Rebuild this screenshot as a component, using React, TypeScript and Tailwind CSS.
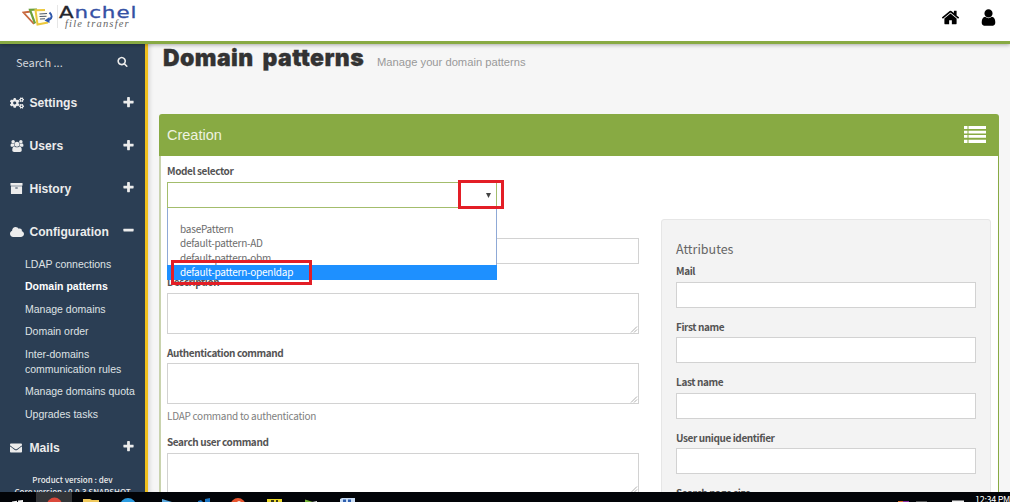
import React from "react";
import { FaCogs, FaCloud, FaEnvelope } from "react-icons/fa";

const SANS = "font-['Noto_Sans_CJK_SC',sans-serif]";
const ARIAL = "font-['Liberation_Sans',sans-serif]";

const PATHS = {
  home: "M1472 992v480q0 26-19 45t-45 19h-384v-384h-256v384h-384q-26 0-45-19t-19-45v-480q0-1 .5-3t.5-3l575-474 575 474q1 2 1 6zm223-69l-62 74q-8 9-21 11h-3q-13 0-21-7l-692-577-692 577q-12 8-24 7-13-2-21-11l-62-74q-8-10-7-23.5t11-21.5l719-599q32-26 76-26t76 26l244 204v-195q0-14 9-23t23-9h192q14 0 23 9t9 23v408l219 182q10 8 11 21.5t-7 23.5z",
  user: "M1536 1399q0 109-62.5 187t-150.5 78h-854q-88 0-150.5-78t-62.5-187q0-85 8.5-160.5t31.5-152 58.5-131 94-89 134.5-34.5q131 128 313 128t313-128q76 0 134.5 34.5t94 89 58.5 131 31.5 152 8.5 160.5zm-256-887q0 159-112.5 271.5t-271.5 112.5-271.5-112.5-112.5-271.5 112.5-271.5 271.5-112.5 271.5 112.5 112.5 271.5z",
  plus: "M1600 736v192q0 40-28 68t-68 28h-416v416q0 40-28 68t-68 28h-192q-40 0-68-28t-28-68v-416h-416q-40 0-68-28t-28-68v-192q0-40 28-68t68-28h416v-416q0-40 28-68t68-28h192q40 0 68 28t28 68v416h416q40 0 68 28t28 68z",
  minus: "M1600 736v192q0 40-28 68t-68 28h-1216q-40 0-68-28t-28-68v-192q0-40 28-68t68-28h1216q40 0 68 28t28 68z",
  search: "M1216 832q0-185-131.5-316.5t-316.5-131.5-316.5 131.5-131.5 316.5 131.5 316.5 316.5 131.5 316.5-131.5 131.5-316.5zm512 832q0 52-38 90t-90 38q-54 0-90-38l-343-342q-179 124-399 124-143 0-273.5-55.5t-225-150-150-225-55.5-273.5 55.5-273.5 150-225 225-150 273.5-55.5 273.5 55.5 225 150 150 225 55.5 273.5q0 220-124 399l343 343q37 37 37 90z",
  users: "M657 896q-162 5-265 128h-134q-82 0-138-40.5t-56-118.5q0-353 124-353 6 0 43.5 21t97.5 42.5 119.5 21.5q67 0 133-23-5 37-5 66 0 139 81 256zm1071 637q0 120-73 189.5t-194 69.5h-874q-121 0-194-69.5t-73-189.5q0-53 3.5-103.5t14-109 26.5-108.5 43-97.5 62-81 85.5-53.5 111.5-20q10 0 43 21.5t73 48 107 48 135 21.5 135-21.5 107-48 73-48 43-21.5q61 0 111.5 20t85.5 53.5 62 81 43 97.5 26.5 108.5 14 109 3.5 103.5zm-1024-1277q0 106-75 181t-181 75-181-75-75-181 75-181 181-75 181 75 75 181zm704 384q0 159-112.5 271.5t-271.5 112.5-271.5-112.5-112.5-271.5 112.5-271.5 271.5-112.5 271.5 112.5 112.5 271.5zm576 225q0 78-56 118.5t-138 40.5h-134q-103-123-265-128 81-117 81-256 0-29-5-66 66 23 133 23 59 0 119.5-21.5t97.5-42.5 43.5-21q124 0 124 353zm-128-609q0 106-75 181t-181 75-181-75-75-181 75-181 181-75 181 75 75 181z",
  archive: "M1088 832q0-26-19-45t-45-19h-256q-26 0-45 19t-19 45 19 45 45 19h256q26 0 45-19t19-45zm576-192v960q0 26-19 45t-45 19h-1408q-26 0-45-19t-19-45v-960q0-26 19-45t45-19h1408q26 0 45 19t19 45zm64-448v256q0 26-19 45t-45 19h-1536q-26 0-45-19t-19-45v-256q0-26 19-45t45-19h1536q26 0 45 19t19 45z",
};

function Icon({ name, className }: { name: keyof typeof PATHS; className: string }) {
  return (
    <svg viewBox={name === "users" ? "0 0 2048 1792" : "0 0 1792 1792"} className={className} fill="currentColor">
      <path d={PATHS[name]} />
    </svg>
  );
}

function Logo() {
  return (
    <div className="flex items-start pl-[22px] pt-[5px]">
      <svg width="32" height="22" viewBox="0 0 32 22" className="mt-[2px] shrink-0" fill="none">
        <path d="M9 4.500 L1.500 5.500 L12 17" stroke="#c8693f" strokeWidth="1.8" />
        <path d="M15 2.500 L8 2.800 L13 16.500" stroke="#6da03c" strokeWidth="2.2" />
        <path d="M13.500 3 L22 2.500 L26 5 L26 15 L15.500 18 Z" fill="#fffdf2" />
        <path d="M23 3 L13.500 3.200 L15.500 17.500 L26 15.500" stroke="#ecc83c" strokeWidth="2" />
        <path d="M17.500 7 L25 6.500 M17.500 9.500 L24.500 9.200 M18 12 L23 11.700" stroke="#4c5868" strokeWidth="1.1" />
        <path d="M27.500 5.500 Q32 10 27 13" stroke="#2f58ac" strokeWidth="2" />
        <path d="M27.500 10 L22.500 13.500 L27.500 16 Z" fill="#2f58ac" />
      </svg>
      <div className="ml-[3px] h-[23px] w-px bg-[#e6e6e6]" />
      <div className="pl-px">
        <div className="h-[14px] w-[60px] origin-left scale-x-[1.340] font-['DejaVu_Sans',sans-serif] text-[16px] leading-[16px] tracking-[0.7px] text-[#3450a4] [-webkit-text-stroke:0.3px]">
          <span className="text-[#26262c]">A</span>nchel
        </div>
        <div className="whitespace-nowrap pl-[6px] font-['Liberation_Serif',serif] text-[10.5px] italic leading-[10px] tracking-[1.2px] text-[#666]">
          file transfer
        </div>
      </div>
    </div>
  );
}

function MenuRow({ icon, label, open }: { icon: React.ReactNode; label: string; open?: boolean }) {
  return (
    <div className="flex h-[42.75px] shrink-0 items-center pl-[10px] pr-[10px] pt-[2px]">
      <span className="flex w-[19.5px] shrink-0 items-center">{icon}</span>
      <span className="flex-1 whitespace-nowrap text-[12.1px] font-bold leading-[16px]">{label}</span>
      <Icon name={open ? "minus" : "plus"} className="mt-[-2px] h-[13px] w-[13px] shrink-0" />
    </div>
  );
}

const SUB = ["LDAP connections", "Domain patterns", "Manage domains", "Domain order", "Inter-domains communication rules", "Manage domains quota", "Upgrades tasks"];

function Sidebar() {
  return (
    <aside className={`flex w-[148px] shrink-0 flex-col border-r-3 border-[#f0bf1c] bg-[#2b3e54] text-[#ececec] ${ARIAL}`}>
      <div className="flex h-[37px] shrink-0 items-center justify-between pb-[2px] pl-[16px] pr-[17px]">
        <span className={`text-[11px] leading-[16px] text-[#d5d9dd] ${SANS}`}>Search ...</span>
        <Icon name="search" className="h-[11px] w-[11px]" />
      </div>
      <MenuRow icon={<FaCogs className="h-[14px] w-[14px]" />} label="Settings" />
      <MenuRow icon={<Icon name="users" className="h-[12px] w-[14px]" />} label="Users" />
      <MenuRow icon={<Icon name="archive" className="h-[13px] w-[13px]" />} label="History" />
      <MenuRow icon={<FaCloud className="h-[14px] w-[14px]" />} label="Configuration" open />
      <ul className="mt-[0.75px] shrink-0 text-[10.5px] leading-[15px] text-[#dfe2e5]">
        {SUB.map((s, i) => (
          <li key={s} className={`py-[3.75px] pl-[25px] ${i === 1 ? "font-bold text-white" : ""}`}>
            {s}
          </li>
        ))}
      </ul>
      <MenuRow icon={<FaEnvelope className="h-[12px] w-[12px]" />} label="Mails" />
      <div className={`shrink-0 whitespace-nowrap pt-[6px] text-center text-[8px] font-medium leading-[12px] ${SANS}`}>
        Product version : dev
        <br />
        Core version : 0.0.3 SNAPSHOT
      </div>
    </aside>
  );
}

function Label({ children, className = "" }: { children: React.ReactNode; className?: string }) {
  return <div className={`text-[10px] font-bold leading-[16px] tracking-[-0.4px] text-[#545454] ${className}`}>{children}</div>;
}

function Area({ className }: { className: string }) {
  return (
    <div className={`flex items-end justify-end border border-[#d2d2d2] bg-white ${className}`}>
      <svg width="8" height="8" viewBox="0 0 8 8" stroke="#999" strokeWidth="0.8">
        <path d="M1 7.5 L7 1.5 M4 7.5 L7 4.5" />
      </svg>
    </div>
  );
}

function Selector() {
  return (
    <div className="relative">
      <div className="flex h-[26px] w-[330px] items-center justify-end border border-[#a3bd6c] bg-white pr-[5px]">
        <svg width="5" height="5" viewBox="0 0 5 5" fill="#444">
          <path d="M0 0 H5 L2.5 5 Z" />
        </svg>
      </div>
      <div className="absolute left-0 top-[26px] z-10 w-[330px] border-x border-[#8fa9d6] bg-white pt-[14px] text-[10px] leading-[14.25px] tracking-[-0.23px] text-[#6c6c6c]">
        <div className="pl-[12px]">basePattern</div>
        <div className="pl-[12px]">default-pattern-AD</div>
        <div className="pl-[12px]">default-pattern-obm</div>
        <div className="-mx-px h-[15px] bg-[#1e90ff] pl-[13px] text-white">default-pattern-openldap</div>
      </div>
      <div className="absolute left-[291px] top-[-2px] z-20 h-[29px] w-[46px] border-[3px] border-[#e31e26]" />
      <div className="absolute left-[4px] top-[77.5px] z-20 h-[25px] w-[141px] border-[3px] border-[#e31e26]" />
    </div>
  );
}

function Taskbar() {
  return (
    <footer className="flex h-[10px] shrink-0 items-start justify-between overflow-hidden bg-[#020408]">
      <svg width="370" height="10" viewBox="0 0 370 10">
        <path d="M12 9.5 L17 8.8 V10 H12 Z M18 8.6 L23 8 V10 H18 Z" fill="#eee" />
        <rect x="36" width="36" height="10" fill="#333538" />
        <circle cx="54.5" cy="13" r="7.5" fill="#d9483b" />
        <path d="M83 7 H90 L92 8 H99 V10 H83 Z" fill="#f0c95c" />
        <circle cx="128" cy="14" r="8" fill="#2b9be0" />
        <path d="M162 7 L172 10 H162 Z" fill="#5aa7dc" />
        <path d="M205 7 L210 6 V10 H205 Z M198 9 L201 8 L203 10 H198 Z" fill="#1c76c4" />
        <circle cx="238" cy="13.5" r="7.5" fill="#e8552f" />
        <circle cx="239" cy="11" r="2" fill="#f4e4da" />
        <path d="M267 7 H282 V10 H267 Z" fill="#ecd92a" />
        <path d="M271 8 H274 V10 H271 Z M276 8 H278 V10 H276 Z" fill="#3a3a18" />
        <path d="M305 7.5 L313 10 H305 Z" fill="#78b83c" />
        <path d="M312 10 L317 9 V10 Z" fill="#ddd" />
        <path d="M342 6 H355 V10 H340 V7 Z" fill="#c8dcf4" />
        <path d="M343 7.5 H346 V10 H343 Z M348 7.5 H351 V10 H348 Z" fill="#2f5fae" />
      </svg>
      <div className="flex">
        <svg width="78" height="10" viewBox="0 0 78 10">
          <path d="M1 9 H6 V10 H1 Z" fill="#e0742c" />
          <path d="M6 9 H12 V10 H6 Z" fill="#8b2ba0" />
          <path d="M19 9.3 H30 V10 H19 Z" fill="#777" />
          <path d="M55 8.5 H67 V10 H55 Z" fill="#eee" />
        </svg>
        <div className={`w-[35px] whitespace-nowrap text-[9px] leading-[15px] tracking-[-0.3px] text-white ${SANS}`}>12:34 PM</div>
      </div>
    </footer>
  );
}

export default function App() {
  return (
    <div className={`flex h-[502px] w-[1010px] flex-col overflow-hidden bg-[#f6f6f6] ${SANS}`}>
      <header className="relative z-30 flex h-[44px] shrink-0 items-start justify-between border-b-3 border-[#88aa43] bg-white shadow-[0_1px_4px_rgba(0,0,0,0.3)]">
        <Logo />
        <div className="flex gap-[19px] pr-[12px] pt-[8px] text-black">
          <Icon name="home" className="h-[19px] w-[19px]" />
          <Icon name="user" className="h-[19px] w-[19px]" />
        </div>
      </header>

      <div className="flex min-h-0 flex-1 overflow-hidden">
        <Sidebar />
        <main className="flex flex-1 flex-col pl-[11px] pr-[11px] shadow-[inset_4px_0_4px_-2px_rgba(0,0,0,0.12)]">
          <div className="flex h-[70px] shrink-0 items-start pl-[4px]">
            <h1 className="w-[204px] whitespace-nowrap font-['Inter',sans-serif] text-[23px] font-black leading-[28px] tracking-[0.4px] [word-spacing:4px] [-webkit-text-stroke:0.3px] text-[#333]">
              Domain patterns
            </h1>
            <span className={`ml-[10px] mt-[11px] whitespace-nowrap text-[11.2px] leading-[14px] text-[#999] ${ARIAL}`}>
              Manage your domain patterns
            </span>
          </div>

          <section className="flex min-h-0 flex-1 flex-col">
            <div className="flex h-[42px] shrink-0 items-center justify-between rounded-t-[3px] bg-[#88aa43] pl-[8px] pr-[13px]">
              <span className={`text-[14.5px] leading-[18px] text-[#eef3e0] ${ARIAL}`}>Creation</span>
              <svg width="22" height="18" viewBox="0 0 22 18" fill="#fff">
                <path d="M0 0h3.5v3H0zM4.500 0H22v3H4.500zM0 4.700h3.500v2.700H0zM4.500 4.700H22v2.700H4.500zM0 9.100h3.500v2.700H0zM4.500 9.100H22v2.700H4.500zM0 13.700h3.500v3.300H0zM4.500 13.700H22v3.300H4.500z" />
              </svg>
            </div>

            <div className="flex min-h-0 flex-1 flex-col overflow-hidden border-l-2 border-r border-l-[#c9d3ae] border-r-[#88aa43] bg-white pl-[6px] pt-[7px]">
              <Label>Model selector</Label>
              <div className="mt-[3px]">
                <Selector />
              </div>
              <div className="mt-[11px] flex">
                <div className="w-[472px] pt-[3px]">
                  <div className="mt-[16px] h-[26px] border border-[#d2d2d2] bg-white" />
                  <Label className="mt-[10px]">Description</Label>
                  <Area className="mt-[3px] h-[41px]" />
                  <Label className="mt-[11px]">Authentication command</Label>
                  <Area className="mt-[2px] h-[41px]" />
                  <div className="mt-[4px] text-[10px] leading-[16px] tracking-[-0.27px] text-[#808080]">LDAP command to authentication</div>
                  <Label className="mt-[10px]">Search user command</Label>
                  <Area className="mt-[3px] h-[41px]" />
                </div>
                <div className="ml-[22px] h-[300px] w-[330px] rounded-t-[3px] border border-[#e6e6e6] bg-[#f3f3f3] px-[14px] pt-[19px]">
                  <h2 className="text-[12.5px] leading-[20px] text-[#666]">Attributes</h2>
                  {["Mail", "First name", "Last name", "User unique identifier", "Search page size"].map((l) => (
                    <div key={l} className="h-[55.5px] pt-[4px]">
                      <Label>{l}</Label>
                      <div className="mt-[2.5px] h-[26px] border border-[#d2d2d2] bg-white" />
                    </div>
                  ))}
                </div>
              </div>
            </div>
          </section>
        </main>
      </div>
      <Taskbar />
    </div>
  );
}
